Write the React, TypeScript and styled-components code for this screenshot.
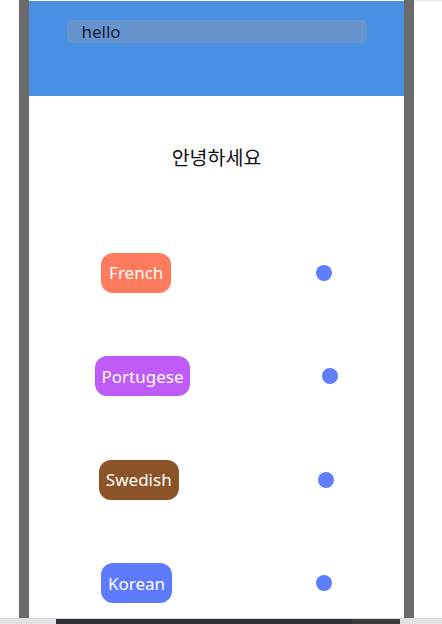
import React from "react";
import styled, { createGlobalStyle } from "styled-components";

const Global = createGlobalStyle`
  html, body { margin: 0; padding: 0; background: #ffffff; }
  body { font-family: "Noto Sans", "Noto Sans CJK KR", sans-serif; }
`;

const Page = styled.div`
  width: 442px;
  height: 624px;
  display: flex;
  flex-direction: column;
  overflow: hidden;
`;

const TopLine = styled.div`
  height: 1px;
  flex-shrink: 0;
  margin-left: 414px;
  background: #e6e6e6;
`;

const Stage = styled.div`
  height: 617px;
  flex-shrink: 0;
  display: flex;
  padding-left: 19px;
`;

const Frame = styled.div`
  width: 375px;
  border-left: 10px solid #6b6b6b;
  border-right: 10px solid #6b6b6b;
  margin-top: -1px;
  display: flex;
  flex-direction: column;
  background: #ffffff;
  overflow: hidden;
`;

const Header = styled.header`
  height: 95px;
  flex-shrink: 0;
  margin-top: 1px;
  background: #4a90e2;
  display: flex;
  justify-content: center;
  align-items: flex-start;
  padding-top: 19px;
  box-sizing: border-box;
`;

const Search = styled.div`
  width: 300px;
  height: 23px;
  border-radius: 5px;
  background: #6794cc;
  box-sizing: border-box;
  padding-left: 15px;
  display: flex;
  align-items: center;
  font-size: 17px;
  color: #13213a;
`;

const Title = styled.div`
  flex-shrink: 0;
  margin-top: 50px;
  line-height: 22px;
  height: 22px;
  text-align: center;
  font-size: 19.5px;
  color: #111;
  font-family: "Noto Sans CJK KR", sans-serif;
  margin-bottom: 53px;
`;

const Row = styled.div`
  height: 103.5px;
  flex-shrink: 0;
  display: flex;
  justify-content: space-around;
  align-items: center;
`;

const Pill = styled.div<{ $bg: string; $w: number }>`
  width: ${(p) => p.$w}px;
  height: 40px;
  border-radius: 12px;
  background: ${(p) => p.$bg};
  color: #ffffff;
  font-size: 17px;
  display: flex;
  align-items: center;
  justify-content: center;
`;

const Dot = styled.div`
  width: 16px;
  height: 16px;
  border-radius: 50%;
  background: #5d7ffd;
`;

const Bottom = styled.div`
  height: 6px;
  flex-shrink: 0;
  display: flex;
  flex-direction: column;
`;

const BottomLine = styled.div`
  height: 1px;
  background: #d9d9d9;
`;

const Strip = styled.div`
  flex: 1;
  display: flex;
`;

const Seg = styled.div<{ $w: number; $c: string }>`
  width: ${(p) => p.$w}px;
  background: ${(p) => p.$c};
`;

const rows = [
  { name: "French", bg: "#fe7b5e", w: 70 },
  { name: "Portugese", bg: "#bf5bf6", w: 95 },
  { name: "Swedish", bg: "#8b5328", w: 80 },
  { name: "Korean", bg: "#5e7bfe", w: 71 },
];

export default function App() {
  return (
    <>
      <Global />
      <Page>
        <TopLine />
        <Stage>
          <Frame>
            <Header>
              <Search>hello</Search>
            </Header>
            <Title>안녕하세요</Title>
            {rows.map((r) => (
              <Row key={r.name}>
                <Pill $bg={r.bg} $w={r.w}>{r.name}</Pill>
                <Dot />
              </Row>
            ))}
          </Frame>
        </Stage>
        <Bottom>
          <BottomLine />
          <Strip>
            <Seg $w={56} $c="#e3e3e3" />
            <Seg $w={296} $c="#2c3137" />
            <Seg $w={48} $c="#3b3b3b" />
            <Seg $w={42} $c="#e3e3e3" />
          </Strip>
        </Bottom>
      </Page>
    </>
  );
}
